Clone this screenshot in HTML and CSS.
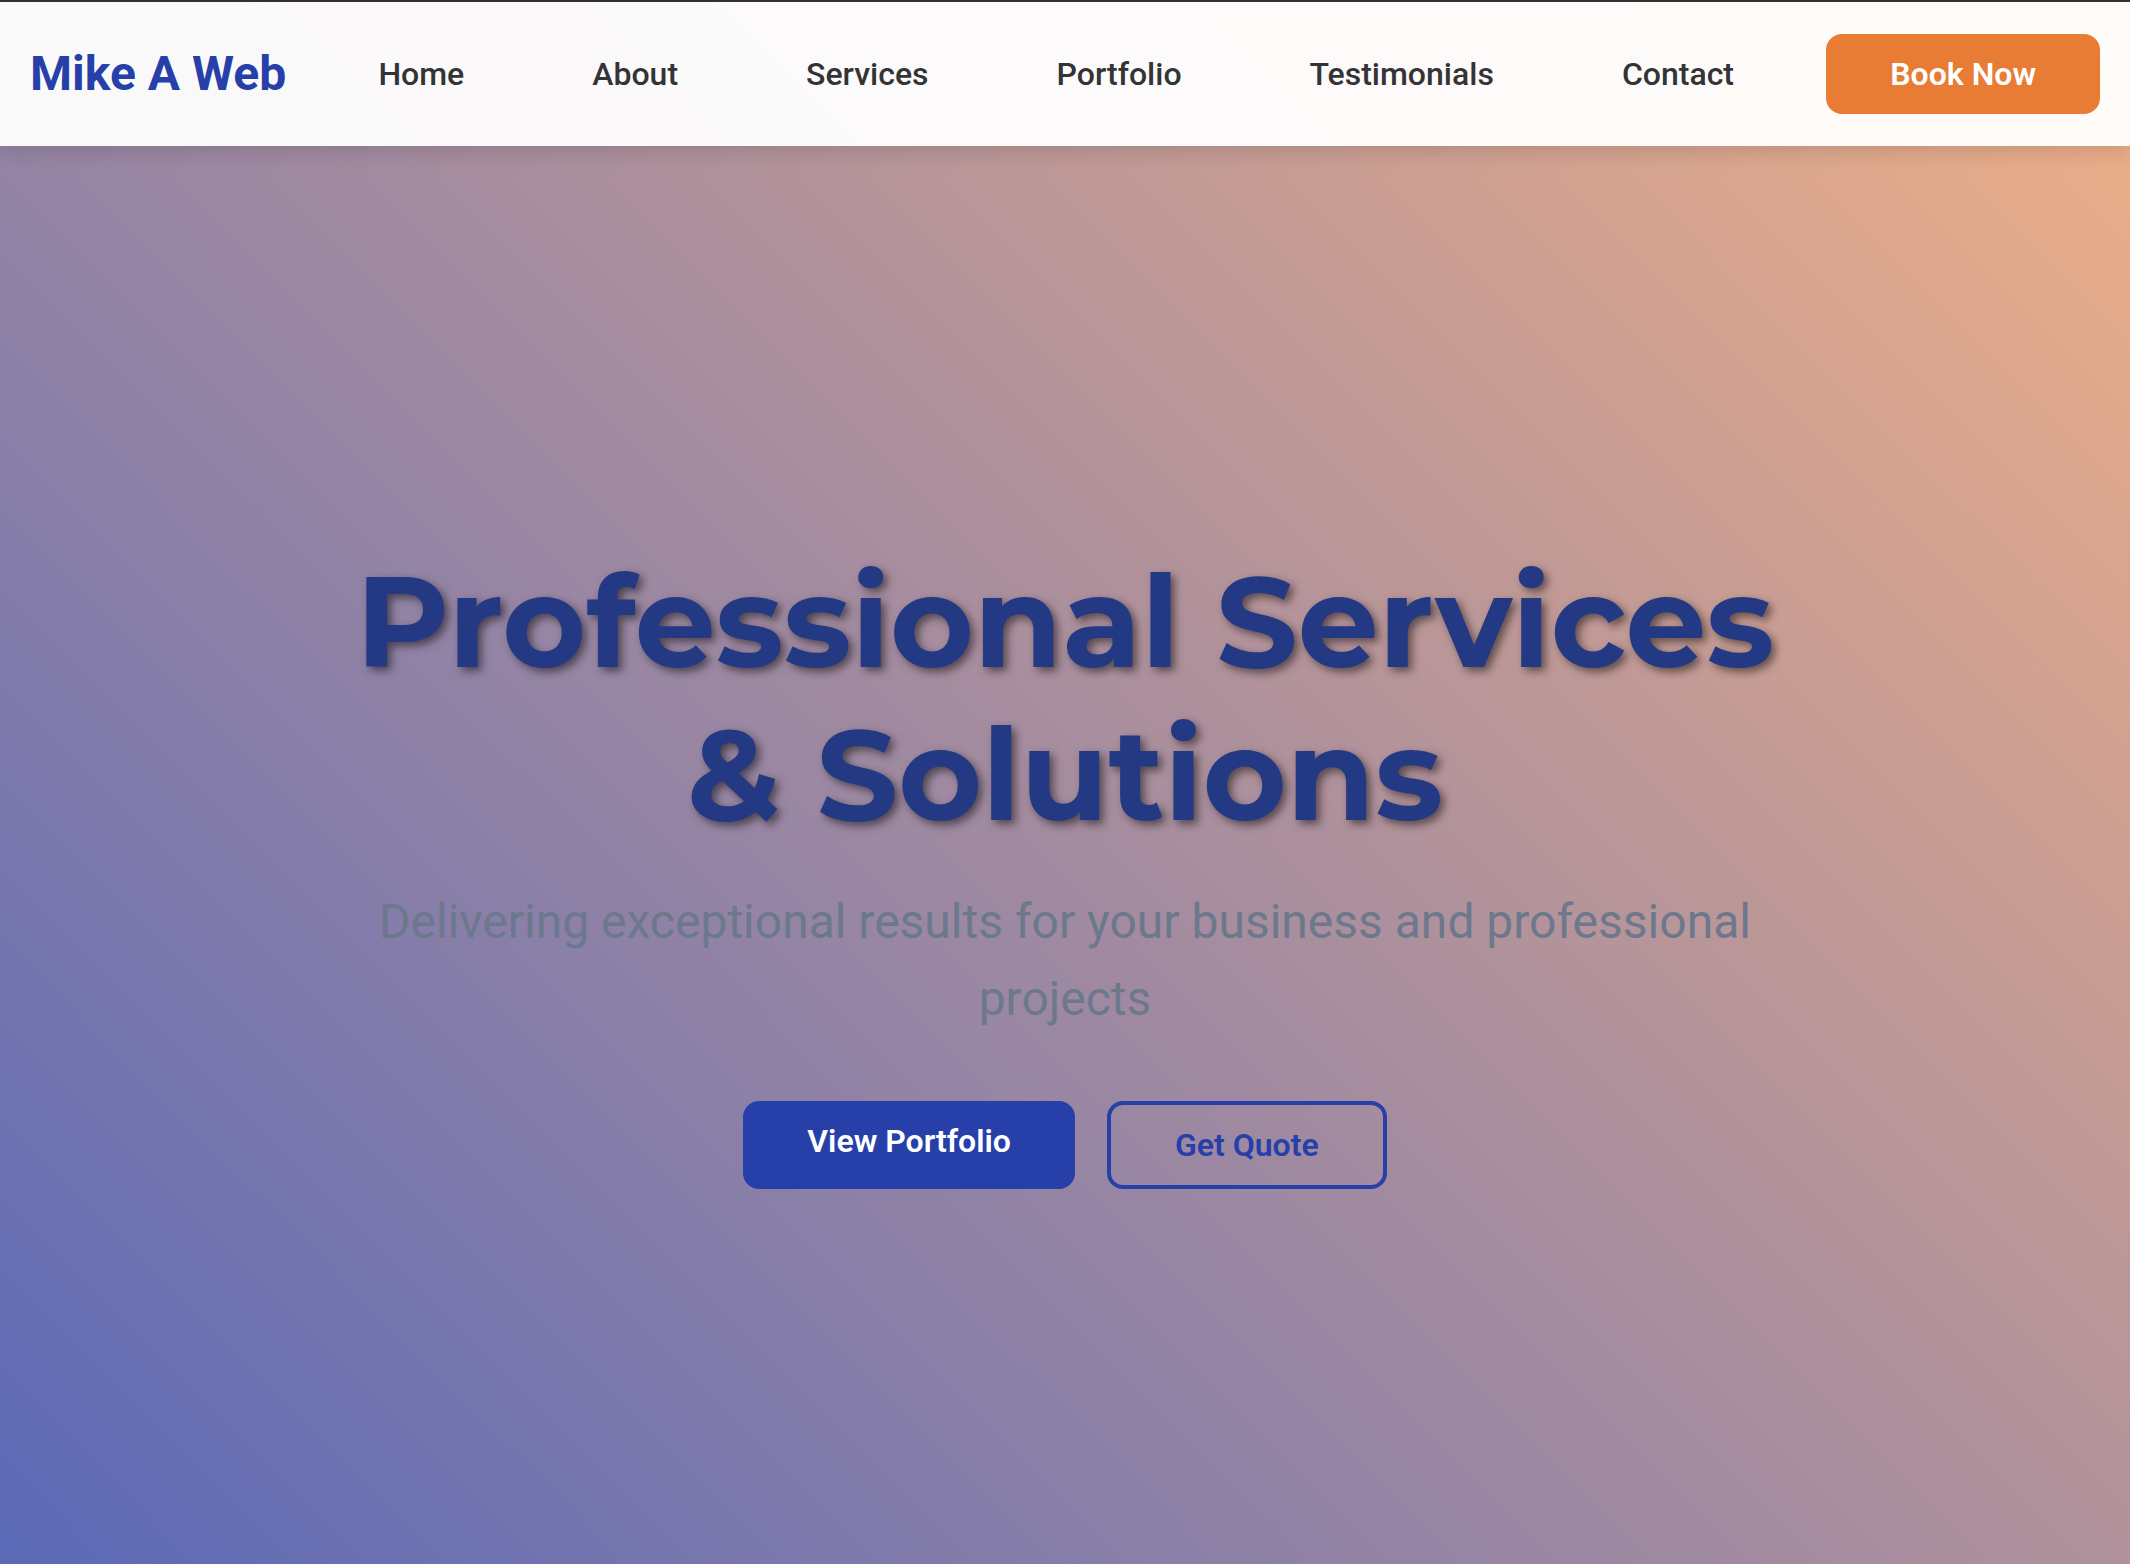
FILE: index.html
```html
<!DOCTYPE html>
<html lang="en">
<head>
  <meta charset="utf-8">
  <meta name="viewport" content="width=device-width, initial-scale=1">
  <title>Mike A Web</title>
  <link rel="stylesheet" href="styles.css">
</head>
<body>
  <header class="site-header">
    <a class="logo" href="#home">Mike A Web</a>
    <nav aria-label="Main">
      <ul class="nav-links">
        <li><a href="#home">Home</a></li>
        <li><a href="#about">About</a></li>
        <li><a href="#services">Services</a></li>
        <li><a href="#portfolio">Portfolio</a></li>
        <li><a href="#testimonials">Testimonials</a></li>
        <li><a href="#contact">Contact</a></li>
      </ul>
    </nav>
    <a class="btn btn-accent" href="#book">Book Now</a>
  </header>
  <main class="hero" id="home">
    <div class="hero-content">
      <h1 class="hero-title">Professional Services &amp; Solutions</h1>
      <p class="hero-subtitle">Delivering exceptional results for your business and professional projects</p>
      <div class="hero-actions">
        <a class="btn btn-primary" href="#portfolio">View Portfolio</a>
        <a class="btn btn-outline" href="#contact">Get Quote</a>
      </div>
    </div>
  </main>
</body>
</html>
```
FILE: styles.css
```css
:root {
  --blue: #263fa9;
  --navy: #243983;
  --orange: #e87c35;
  --ink: #333435;
  --slate: #6c788c;
}

* {
  box-sizing: border-box;
  margin: 0;
  padding: 0;
}

body {
  display: flex;
  flex-direction: column;
  min-height: 100vh;
  font-family: Roboto, "Liberation Sans", sans-serif;
  color: var(--ink);
  background: linear-gradient(45deg, #5b69b7, #f0b087);
}

a {
  color: inherit;
  text-decoration: none;
}

.site-header {
  display: flex;
  align-items: center;
  justify-content: space-between;
  padding: 32px 30px;
  border-top: 2px solid #322f35;
  background: rgba(255, 255, 255, 0.95);
  background-clip: padding-box;
  box-shadow: 0 4px 20px rgba(0, 0, 0, 0.15);
}

.logo {
  font-size: 48px;
  font-weight: 700;
  line-height: 76px;
  color: var(--blue);
}

.nav-links {
  display: flex;
  gap: 128px;
  list-style: none;
  font-size: 32px;
  font-weight: 500;
  line-height: 51px;
}

.btn {
  padding: 14px 64px;
  border-radius: 16px;
  font-size: 32px;
  font-weight: 600;
  line-height: 52px;
}

.btn-accent {
  background: var(--orange);
  color: #fff;
}

.btn-primary {
  background: var(--blue);
  color: #fff;
}

.btn-outline {
  border: 4px solid var(--blue);
  color: var(--blue);
}

.hero {
  flex: 1;
  display: flex;
  align-items: center;
  justify-content: center;
  padding: 24px 32px 0;
}

.hero-content {
  max-width: 1472px;
  text-align: center;
}

.hero-title {
  margin-bottom: 32px;
  font-family: Montserrat, Inter, sans-serif;
  font-size: 128px;
  font-weight: 700;
  line-height: 153px;
  color: var(--navy);
  text-shadow: 4px 4px 8px rgba(0, 0, 0, 0.5);
}

.hero-subtitle {
  margin-bottom: 64px;
  font-size: 48px;
  line-height: 77px;
  color: var(--slate);
}

.hero-actions {
  display: flex;
  justify-content: center;
  gap: 32px;
}
```
